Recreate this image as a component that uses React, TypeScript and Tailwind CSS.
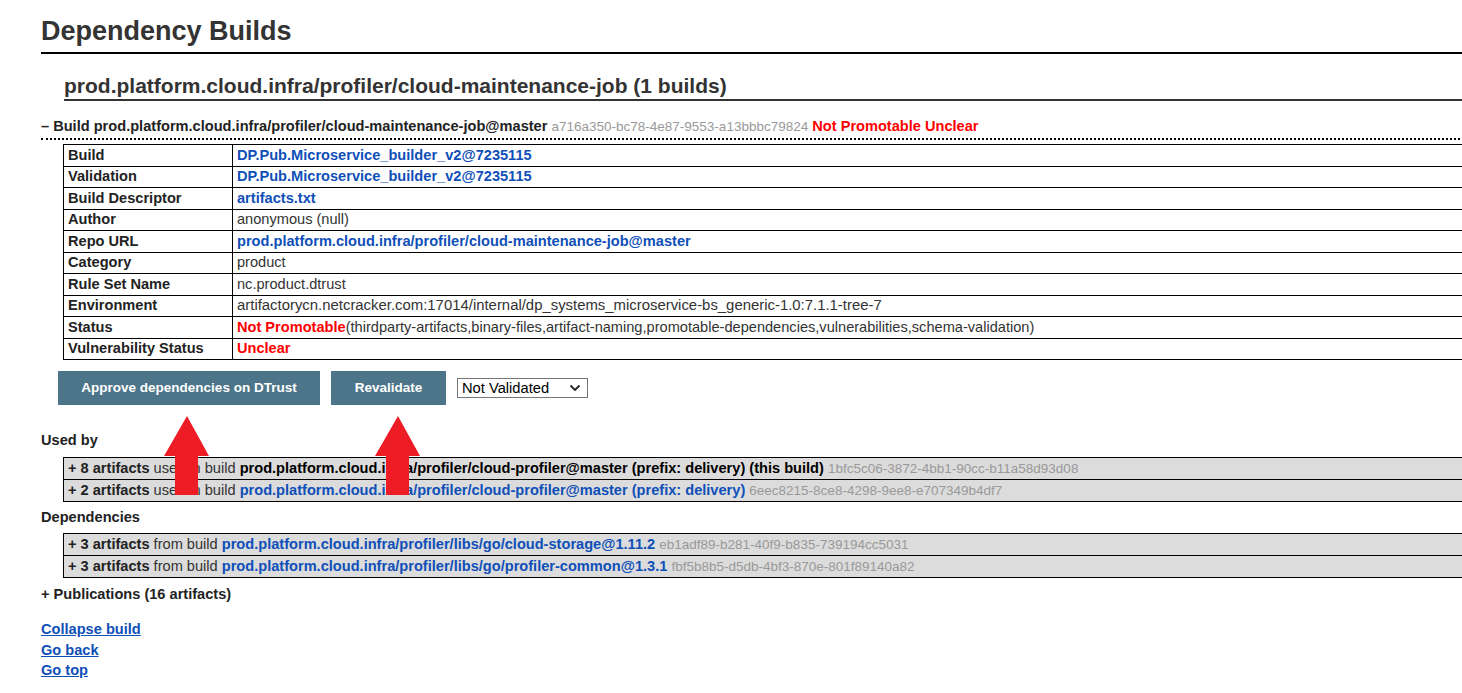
import React from 'react';

const LINK = 'text-[#0f4fb8] font-bold';
const HASH = 'text-[#999] text-[13.5px]';

const details: { label: string; value: React.ReactNode }[] = [
  { label: 'Build', value: <span className={LINK}>DP.Pub.Microservice_builder_v2@7235115</span> },
  { label: 'Validation', value: <span className={LINK}>DP.Pub.Microservice_builder_v2@7235115</span> },
  { label: 'Build Descriptor', value: <span className={LINK}>artifacts.txt</span> },
  { label: 'Author', value: 'anonymous (null)' },
  { label: 'Repo URL', value: <span className={LINK}>prod.platform.cloud.infra/profiler/cloud-maintenance-job@master</span> },
  { label: 'Category', value: 'product' },
  { label: 'Rule Set Name', value: 'nc.product.dtrust' },
  { label: 'Environment', value: <span className="text-[14.9px]">artifactorycn.netcracker.com:17014/internal/dp_systems_microservice-bs_generic-1.0:7.1.1-tree-7</span> },
  {
    label: 'Status',
    value: (
      <>
        <span className="text-[#ff0000] font-bold">Not Promotable</span>
        (thirdparty-artifacts,binary-files,artifact-naming,promotable-dependencies,vulnerabilities,schema-validation)
      </>
    ),
  },
  { label: 'Vulnerability Status', value: <span className="text-[#ff0000] font-bold">Unclear</span> },
];

const usedBy = [
  { count: '8', verb: 'used in build', name: 'prod.platform.cloud.infra/profiler/cloud-profiler@master (prefix: delivery) (this build)', self: true, hash: '1bfc5c06-3872-4bb1-90cc-b11a58d93d08' },
  { count: '2', verb: 'used in build', name: 'prod.platform.cloud.infra/profiler/cloud-profiler@master (prefix: delivery)', self: false, hash: '6eec8215-8ce8-4298-9ee8-e707349b4df7' },
];

const deps = [
  { count: '3', verb: 'from build', name: 'prod.platform.cloud.infra/profiler/libs/go/cloud-storage@1.11.2', self: false, hash: 'eb1adf89-b281-40f9-b835-739194cc5031' },
  { count: '3', verb: 'from build', name: 'prod.platform.cloud.infra/profiler/libs/go/profiler-common@1.3.1', self: false, hash: 'fbf5b8b5-d5db-4bf3-870e-801f89140a82' },
];

type Ref = { count: string; verb: string; name: string; self: boolean; hash: string };

function RefTable({ rows }: { rows: Ref[] }) {
  return (
    <table className="ml-[22px] w-[1420px] border-collapse bg-[#dcdcdc]">
      <tbody>
        {rows.map((r, i) => (
          <tr key={i} className="h-[22px]">
            <td className="border border-black px-[4px] py-0 leading-[18px] whitespace-nowrap">
              <span className="font-bold text-[#222]">+ {r.count} artifacts</span>{' '}
              <span className="text-[#333]">{r.verb}</span>{' '}
              <span className={r.self ? 'font-bold text-black' : LINK}>{r.name}</span>{' '}
              <span className={HASH}>{r.hash}</span>
            </td>
          </tr>
        ))}
      </tbody>
    </table>
  );
}

function Arrow({ left }: { left: number }) {
  return (
    <svg
      className="absolute top-[416px]"
      style={{ left }}
      width="48"
      height="80"
      viewBox="0 0 48 80"
    >
      <polygon points="24,0 46,40 35,40 35,79 12,79 12,40 1,40" fill="#ee1c25" />
    </svg>
  );
}

export default function App() {
  return (
    <div className="relative w-[1462px] h-[693px] overflow-hidden bg-white font-['Liberation_Sans',Arial,sans-serif] text-[14.6px] text-[#333]">
      <div className="w-[1480px] pl-[41px] pt-[15px]">
        <h1 className="text-[27px] leading-[32px] font-bold text-[#333] border-b-2 border-black pb-[5px]">
          Dependency Builds
        </h1>

        <h2 className="mt-[20px] ml-[23px] text-[21px] leading-[24px] font-bold text-[#333] border-b-2 border-[#333] pb-[1px]">
          prod.platform.cloud.infra/profiler/cloud-maintenance-job (1 builds)
        </h2>

        <div className="mt-[16px] leading-[18px] pb-[2px] border-b-2 border-dotted border-black whitespace-nowrap">
          <span className="font-bold text-[#222]">– Build prod.platform.cloud.infra/profiler/cloud-maintenance-job@master</span>{' '}
          <span className={HASH}>a716a350-bc78-4e87-9553-a13bbbc79824</span>{' '}
          <span className="font-bold text-[#ff0000]">Not Promotable Unclear</span>
        </div>

        <table className="mt-[4px] ml-[22px] w-[1420px] border-collapse">
          <tbody>
            {details.map((d) => (
              <tr key={d.label} className="h-[21.5px]">
                <td className="w-[169px] border border-black px-[4px] py-0 leading-[17px] font-bold text-[#222] whitespace-nowrap">
                  {d.label}
                </td>
                <td className="border border-black px-[4px] py-0 leading-[17px] text-[#333] whitespace-nowrap">
                  {d.value}
                </td>
              </tr>
            ))}
          </tbody>
        </table>

        <div className="mt-[11px] ml-[17px] flex items-center gap-[11px]">
          <button className="h-[34px] w-[262px] bg-[#4d7589] text-white text-[13.5px] font-bold">
            Approve dependencies on DTrust
          </button>
          <button className="h-[34px] w-[115px] bg-[#4d7589] text-white text-[13.5px] font-bold">
            Revalidate
          </button>
          <div className="h-[20px] w-[131px] border border-[#767676] flex items-center justify-between pl-[4px] pr-[6px] text-[14.7px] text-black">
            <span>Not Validated</span>
            <svg width="12" height="8" viewBox="0 0 12 8">
              <path d="M1.5 1.5 L6 6 L10.5 1.5" fill="none" stroke="#222" strokeWidth="1.8" />
            </svg>
          </div>
        </div>

        <div className="mt-[26px] leading-[18px] font-bold text-[#222]">Used by</div>
        <div className="mt-[8px]">
          <RefTable rows={usedBy} />
        </div>

        <div className="mt-[6px] leading-[18px] font-bold text-[#222]">Dependencies</div>
        <div className="mt-[7px]">
          <RefTable rows={deps} />
        </div>

        <div className="mt-[7px] leading-[18px] font-bold text-[#222]">+ Publications (16 artifacts)</div>

        <div className="mt-[16px] flex flex-col items-start">
          <a className={`${LINK} underline leading-[20.5px]`} href="#">Collapse build</a>
          <a className={`${LINK} underline leading-[20.5px]`} href="#">Go back</a>
          <a className={`${LINK} underline leading-[20.5px]`} href="#">Go top</a>
        </div>
      </div>

      <Arrow left={163} />
      <Arrow left={374} />
    </div>
  );
}
